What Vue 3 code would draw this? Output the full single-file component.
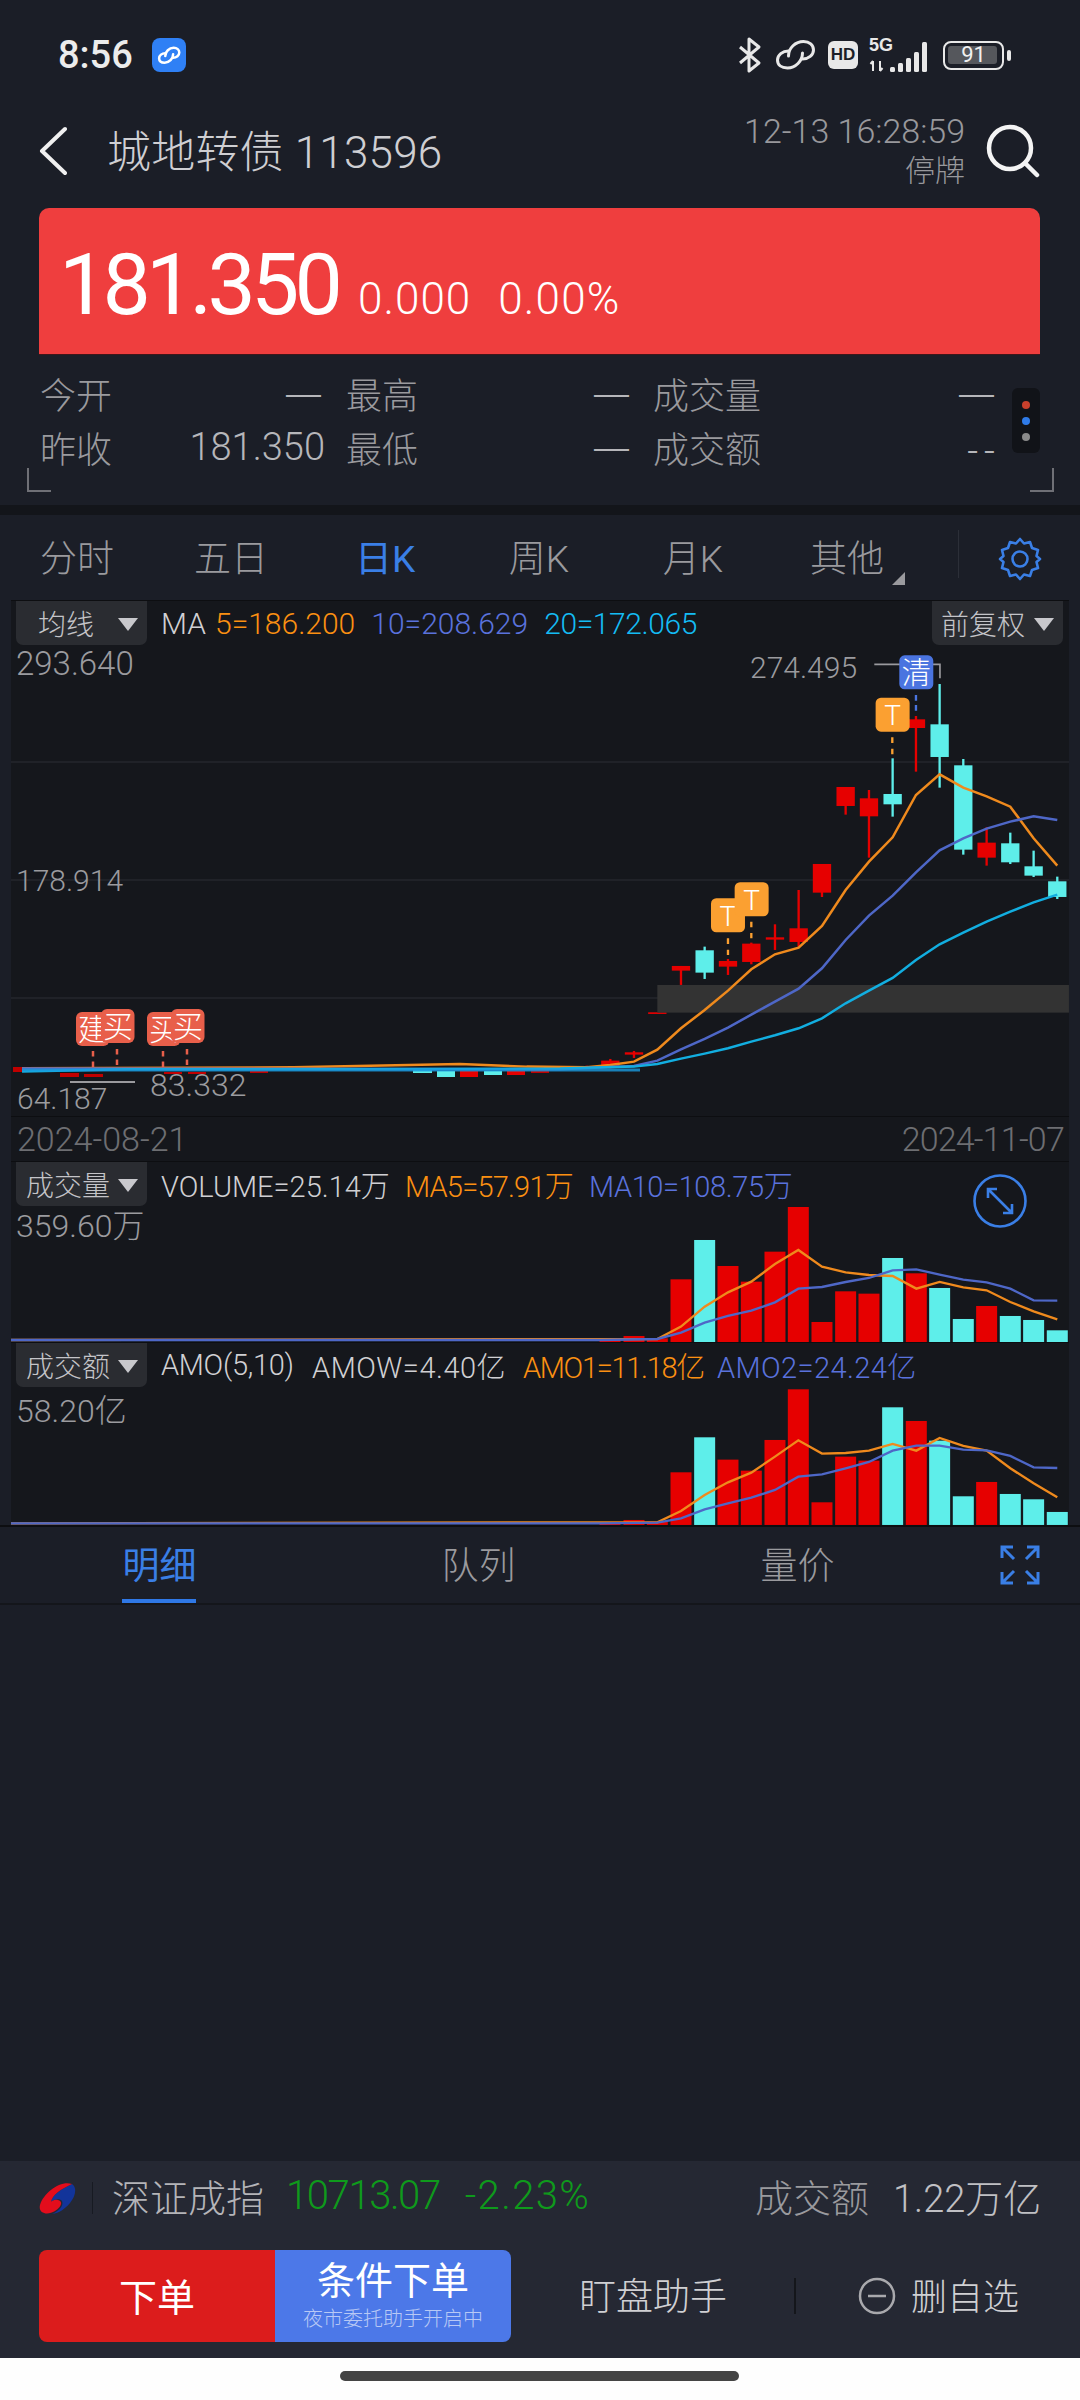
<script setup>
const RED = '#e60000'
const CY = '#5eeeea'
const candles = [
  [292,1119,1119,1117,1122,RED,55],[363,978,1035,978,992,RED],[434,920,1017,931,998,CY],[504,957,1005,963,980,RED],
  [574,908,973,911,966,RED],[645,853,930,892,899,RED],[716,750,920,865,906,RED],[786,672,771,672,758,RED],
  [857,441,524,441,498,RED],[927,450,653,475,529,RED],[998,355,530,462,493,CY],[1068,228,395,238,264,RED],
  [1139,132,443,253,351,CY],[1210,357,644,376,629,CY],[1280,562,677,608,653,RED],[1351,578,672,610,667,CY],
  [1421,632,711,679,707,CY],[1492,710,777,724,771,CY],[222,1233,1254,1237,1244,RED],[151,1257,1285,1262,1280,RED],
  [80,1277,1285,1279,1284,RED]
]
const flat = [[13,1067,10,5,'#c00000'],[60,1073,19,4,'#c00000'],[84,1074,19,3,'#c00000'],[250,1071,18,2,'#c00000'],[413,1069,19,4,CY],[437,1071,18,6,CY],[460,1071,18,6,RED],[484,1071,18,4,CY],[507,1071,18,4,RED],[531,1070,18,3,'#c00000'],[164,1072,18,2,'#c00000'],[188,1072,18,2,'#c00000']]
const p = a => a.map(v => v.join(',')).join(' ')
const mainLines = [
  {c:'#ef8a1d',d:p([[-1614,1285],[-800,1282],[-300,1272],[-100,1280],[80,1282],[151,1275],[222,1265],[292,1229],[363,1165],[434,1110],[504,1052],[574,988],[645,943],[716,923],[786,858],[857,750],[927,665],[998,592],[1068,465],[1139,403],[1210,443],[1280,469],[1351,500],[1421,595],[1492,677]])},
  {c:'#4e67c7',d:p([[-1614,1286],[-500,1287],[0,1288],[222,1278],[292,1262],[363,1228],[434,1197],[504,1163],[574,1124],[645,1085],[716,1046],[786,985],[857,900],[927,827],[998,767],[1068,697],[1139,631],[1210,595],[1280,566],[1351,545],[1421,529],[1492,540]])},
  {c:'#12aee0',d:p([[-1614,1295],[-1300,1288],[-500,1287],[0,1286],[222,1280],[292,1272],[363,1256],[434,1241],[504,1225],[574,1205],[645,1186],[716,1165],[786,1135],[857,1090],[927,1052],[998,1014],[1068,960],[1139,913],[1210,878],[1280,845],[1351,815],[1421,787],[1492,764]])}
]
const cx = [243,314,384,454,525,595,666,737,807,878,949,1019,1090,1160,1231,1301,1372]
const colr = [RED,CY,RED,RED,RED,RED,RED,RED,RED,CY,RED,CY,CY,RED,CY,CY,CY]
const volTops = [418,300,378,425,335,201,546,454,461,354,400,444,537,498,528,540,571]
const amoTops = [997,892,959,992,900,748,1087,950,962,802,843,902,1069,1026,1062,1078,1116]
const volBars = [[102,588,RED],[172,595,RED],[30,596,RED],...cx.map((x,i)=>[x,volTops[i],colr[i]])]
const amoBars = [[102,1140,RED],[172,1145,RED],[30,1146,RED],...cx.map((x,i)=>[x,amoTops[i],colr[i]])]
const volOrange = p([[-1770,600],[172,597],[243,560],[314,500],[384,457],[454,425],[525,372],[595,330],[666,380],[737,397],[807,405],[878,408],[949,446],[1019,426],[1090,442],[1160,451],[1231,486],[1301,514],[1372,538]])
const volBlue = p([[-1770,600],[0,600],[172,597],[243,578],[314,548],[384,528],[454,512],[525,487],[595,446],[666,441],[737,426],[807,414],[878,391],[949,388],[1019,404],[1090,419],[1160,427],[1231,446],[1301,481],[1372,482]])
const amoOrange = p([[-1770,1150],[172,1147],[243,1113],[314,1065],[384,1027],[454,998],[525,950],[595,901],[666,941],[737,939],[807,932],[878,912],[949,932],[1019,894],[1090,918],[1160,932],[1231,985],[1301,1030],[1372,1072]])
const amoBlue = p([[-1770,1150],[0,1150],[172,1148],[243,1135],[314,1108],[384,1090],[454,1073],[525,1050],[595,1010],[666,1003],[737,985],[807,966],[878,932],[949,917],[1019,917],[1090,929],[1160,931],[1231,948],[1301,982],[1372,984]])
const tabs = ['分时','五日','日K','周K','月K','其他']
const signal = [[21,5],[29,9],[37,14],[45,20],[53,30]]
const tBadges = [[453,775,504,895,945],[524,727,574,845,895],[947,173,997,292,345]]
const buyBadges = [[76,1012,'建',93,1051,1067],[101,1009,'买',117,1049,1065],[147,1012,'买',163,1051,1067],[171,1009,'买',187,1049,1065]]
</script>

<template>
  <div class="page">
    <div class="status">
      <span class="clock">8:56</span>
      <svg class="app-icon" viewBox="0 0 34 34"><rect width="34" height="34" rx="8" fill="#2f80f5"/><g transform="translate(6 9) scale(.56)" fill="none" stroke="#fff" stroke-width="4.500" stroke-linecap="round"><path d="M13 16C13 8 20 1.500 28 1.500C34 1.500 38 5 38 10C38 15 33 19 27 19"/><path d="M27 13C27 21 20 28 12 28C6 28 2 25 2 20C2 15 7 11 13 11"/></g></svg>
      <div class="status-right">
        <svg class="st-bt" viewBox="0 0 24 38" fill="none" stroke="#e8e8e8" stroke-width="3" stroke-linejoin="round"><path d="M2 11L21 27L11 35V3L21 11L2 27"/></svg>
        <svg class="st-link" viewBox="0 0 40 30" fill="none" stroke="#e8e8e8" stroke-width="3" stroke-linecap="round"><path d="M13 16C13 8 20 1.500 28 1.500C34 1.500 38 5 38 10C38 15 33 19 27 19"/><path d="M27 13C27 21 20 28 12 28C6 28 2 25 2 20C2 15 7 11 13 11"/></svg>
        <span class="st-hd">HD</span>
        <div class="st-sig">
          <span class="st-5g">5G</span>
          <svg viewBox="0 0 62 32" class="st-bars"><path d="M4 21V31M1.500 24L4 21M11 31V21M11 31L13.500 28" stroke="#e8e8e8" stroke-width="2" fill="none"/><rect v-for="b in signal" :key="b[0]" :x="b[0]" :y="32-b[1]" width="5" :height="b[1]" rx="1.500" fill="#e8e8e8"/></svg>
        </div>
        <div class="st-batt"><div class="st-batt-fill"></div><span>91</span></div>
        <i class="st-tip"></i>
      </div>
    </div>

    <header class="head">
      <svg class="back" viewBox="0 0 28 50" fill="none" stroke="#f0f0f0" stroke-width="4" stroke-linecap="round" stroke-linejoin="round"><path d="M26 3L3 25L26 47"/></svg>
      <h1 class="title">城地转债 113596</h1>
      <div class="head-info"><div class="hi-date">12-13 16:28:59</div><div>停牌</div></div>
      <svg class="search" viewBox="0 0 54 54" fill="none" stroke="#f4f4f4" stroke-width="4.500" stroke-linecap="round"><circle cx="24" cy="24" r="21"/><path d="M39 39L51 51"/></svg>
    </header>

    <section class="quote">
      <span class="q-big">181.350</span><span class="q-s1">0.000</span><span class="q-s2">0.00%</span>
    </section>

    <section class="stats">
      <span>今开</span><b class="dash">—</b><span>最高</span><b class="dash">—</b><span>成交量</span><b class="dash">—</b>
      <span>昨收</span><b>181.350</b><span>最低</span><b class="dash">—</b><span>成交额</span><b class="dbl">--</b>
      <div class="dots"><i class="d1"></i><i class="d2"></i><i class="d3"></i></div>
      <i class="bracket b-l"></i><i class="bracket b-r"></i>
    </section>

    <nav class="tabs">
      <span v-for="t in tabs" :key="t" class="tab" :class="{on:t==='日K'}">{{ t }}</span>
      <i class="corner"></i><i class="tab-div"></i>
      <svg class="gear" viewBox="0 0 44 44" fill="none" stroke="#3a7fe6" stroke-width="2.600" stroke-linejoin="round"><path d="M22 2L26 6.500L32 5L34 11L40 13L38.500 19L42 22L38.500 25L40 31L34 33L32 39L26 37.500L22 42L18 37.500L12 39L10 33L4 31L5.500 25L2 22L5.500 19L4 13L10 11L12 5L18 6.500Z"/><circle cx="22" cy="22" r="7.500"/></svg>
    </nav>

    <section class="panel main">
      <svg class="plot" viewBox="11 600 1058 516" width="1058" height="516">
        <g stroke="#25272d" stroke-width="1.500"><path d="M11 762H1069M11 880H1069M11 998H658"/></g>
        <rect v-for="(f,i) in flat" :key="'f'+i" :x="f[0]" :y="f[1]" :width="f[2]" :height="f[3]" :fill="f[4]"/>
        <g transform="translate(560 640) scale(.3333)">
          <g v-for="(c,i) in candles" :key="i">
            <line :x1="c[0]" :x2="c[0]" :y1="c[1]" :y2="c[2]" :stroke="c[5]" stroke-width="7"/>
            <rect :x="c[0]-(c[6]||55)/2" :y="c[3]" :width="c[6]||55" :height="c[4]-c[3]" :fill="c[5]"/>
          </g>
          <rect x="292" y="1035" width="1235" height="83" fill="#333"/>
          <polyline v-for="l in mainLines" :key="l.c" :points="l.d" fill="none" :stroke="l.c" stroke-width="7.500"/>
          <path d="M943 73H1140V115" fill="none" stroke="#9a9a9e" stroke-width="5"/>
          <g v-for="t in tBadges" :key="t[0]">
            <line :x1="t[2]" :x2="t[2]" :y1="t[3]" :y2="t[4]" stroke="#fba031" stroke-width="7" stroke-dasharray="17 17"/>
            <rect :x="t[0]" :y="t[1]" width="102" height="102" rx="16" fill="#fba031"/>
            <text :x="t[0]+51" :y="t[1]+82" class="badge-t">T</text>
          </g>
          <line x1="1068" x2="1068" y1="165" y2="212" stroke="#4a74e0" stroke-width="7" stroke-dasharray="17 13"/>
          <rect x="1018" y="46" width="102" height="102" rx="16" fill="#4a74e0"/>
          <text x="1069" y="130" class="badge-t cjk">清</text>
        </g>
        <path d="M22 1070H640" stroke="#1a9be0" stroke-width="3" opacity=".8"/>
        <g v-for="b in buyBadges" :key="b[0]">
          <line :x1="b[3]" :x2="b[3]" :y1="b[4]" :y2="b[5]" stroke="#e85f4a" stroke-width="2.500" stroke-dasharray="5.500 5"/>
          <rect :x="b[0]" :y="b[1]" width="33.500" height="34" rx="6" fill="#e85f4a"/>
          <text :x="b[0]+17" :y="b[1]+28" class="buy-t">{{ b[2] }}</text>
        </g>
        <path d="M70 1082H135" stroke="#9a9a9e" stroke-width="2"/>
      </svg>
      <div class="legend big">
        <span class="drop">均线<i></i></span>
        <span class="lg lg-w">MA</span>
        <span class="lg lg-o">5=186.200</span>
        <span class="lg lg-b">10=208.629</span>
        <span class="lg lg-c">20=172.065</span>
        <span class="drop drop-r">前复权<i></i></span>
      </div>
      <span class="num n1">293.640</span>
      <span class="num n2">178.914</span>
      <span class="num n3">274.495</span>
      <span class="num n4">64.187</span>
      <span class="num n5">83.332</span>
    </section>

    <div class="dates"><span>2024-08-21</span><span class="date-r">2024-11-07</span></div>

    <section class="panel vol">
      <svg class="plot" viewBox="11 1161 1058 181" width="1058" height="181">
        <g transform="translate(600 1140) scale(.3333)">
          <rect v-for="b in volBars" :key="b[0]" :x="b[0]-31.500" :y="b[1]" width="63" :height="607-b[1]" :fill="b[2]"/>
          <polyline :points="volOrange" fill="none" stroke="#ef8a1d" stroke-width="7"/>
          <polyline :points="volBlue" fill="none" stroke="#4e67c7" stroke-width="7"/>
        </g>
      </svg>
      <div class="legend">
        <span class="drop drop3">成交量<i></i></span>
        <span class="lg lg-w v1">VOLUME=25.14万</span>
        <span class="lg lg-o v2">MA5=57.91万</span>
        <span class="lg lg-b v3">MA10=108.75万</span>
      </div>
      <span class="num n6">359.60万</span>
      <svg class="expand" viewBox="0 0 54 54" fill="none" stroke="#3a7fe6" stroke-width="2.600"><circle cx="27" cy="27" r="25.500"/><path d="M15 15L39 39M15 24V15H24M39 30V39H30"/></svg>
    </section>

    <section class="panel amo">
      <svg class="plot" viewBox="11 1342 1058 183" width="1058" height="183">
        <g transform="translate(600 1140) scale(.3333)">
          <rect v-for="b in amoBars" :key="b[0]" :x="b[0]-31.500" :y="b[1]" width="63" :height="1155-b[1]" :fill="b[2]"/>
          <polyline :points="amoOrange" fill="none" stroke="#ef8a1d" stroke-width="7"/>
          <polyline :points="amoBlue" fill="none" stroke="#4e67c7" stroke-width="7"/>
        </g>
      </svg>
      <div class="legend">
        <span class="drop drop3">成交额<i></i></span>
        <span class="lg lg-w a1">AMO(5,10)</span>
        <span class="lg lg-w a2">AMOW=4.40亿</span>
        <span class="lg lg-o a3">AMO1=11.18亿</span>
        <span class="lg lg-b a4">AMO2=24.24亿</span>
      </div>
      <span class="num n7">58.20亿</span>
    </section>

    <nav class="sub-tabs">
      <span class="sub on">明细</span><span class="sub">队列</span><span class="sub">量价</span>
      <svg class="full" viewBox="0 0 40 40" fill="none" stroke="#3a7fe6" stroke-width="3"><path d="M2 13V2H13M38 13V2H27M2 27V38H13M38 27V38H27M2 2L14 14M38 2L26 14M2 38L14 26M38 38L26 26"/></svg>
    </nav>

    <div class="filler"></div>

    <footer class="foot">
      <div class="index">
        <svg class="logo" viewBox="0 0 37 33"><path d="M33 2C38 5 37 14 31 21C26 27 20 31 13 32C20 29 25 24 23 19C21 16 15 17 12 20C13 13 22 7 33 2Z" fill="#12349a"/><path d="M33 2C22 -2 5 10 1 23C-1 31 8 34 16 29C23 25 24 19 19 18C15 17 12 20 12 20C13 13 22 7 33 2Z" fill="#e30d1c"/></svg>
        <i class="idx-div"></i>
        <span class="idx-name">深证成指</span>
        <span class="idx-green">10713.07</span>
        <span class="idx-green idx-pct">-2.23%</span>
        <span class="idx-lab">成交额</span>
        <span class="idx-val">1.22万亿</span>
      </div>
      <div class="actions">
        <button class="btn-red">下单</button>
        <button class="btn-blue"><span>条件下单</span><small>夜市委托助手开启中</small></button>
        <span class="watch">盯盘助手</span>
        <i class="act-div"></i>
        <svg class="minus" viewBox="0 0 38 38" fill="none" stroke="#a9a9ad" stroke-width="2.500"><circle cx="19" cy="19" r="17"/><path d="M10 19H28"/></svg>
        <span class="remove">删自选</span>
      </div>
    </footer>
    <div class="navbar"><i></i></div>
  </div>
</template>

<style>
html, body { margin: 0; background: #1b1e27; }
.badge-t { font-size: 84px; fill: #fff; text-anchor: middle; font-family: Roboto, sans-serif; font-weight: 300; }
.badge-t.cjk { font-size: 88px; font-family: "Noto Sans CJK SC", sans-serif; }
.buy-t { font-size: 30px; fill: #fff; text-anchor: middle; font-family: "Noto Sans CJK SC", sans-serif; }
</style>
<style scoped>
.page { width: 1080px; height: 2400px; display: flex; flex-direction: column; background: #1b1e27; overflow: hidden; font-family: Roboto, "Noto Sans CJK SC", sans-serif; font-weight: 300; color: #a0a0a4; position: relative; }
i { display: block; }

.status { height: 110px; display: flex; align-items: center; padding: 0 0 0 58px; box-sizing: border-box; flex: none; }
.clock { font-size: 38px; font-weight: 500; color: #ececec; width: 94px; }
.app-icon { width: 34px; height: 34px; }
.status-right { margin-left: auto; margin-right: 69px; display: flex; align-items: center; }
.st-bt { width: 24px; height: 38px; margin-right: 13px; }
.st-link { width: 41px; height: 30px; margin-right: 12px; }
.st-hd { width: 30px; height: 28px; border-radius: 6px; background: #e8e8e8; color: #1b1e27; font: 700 17px "Liberation Sans", sans-serif; display: flex; align-items: center; justify-content: center; margin-right: 11px; }
.st-sig { width: 62px; height: 34px; position: relative; margin-right: 12px; }
.st-5g { position: absolute; left: 0; top: -3px; font: 700 18px "Liberation Sans", sans-serif; color: #e8e8e8; }
.st-bars { position: absolute; left: 0; top: 2px; width: 62px; height: 32px; }
.st-batt { width: 61px; height: 29px; border: 2.500px solid #e8e8e8; border-radius: 8px; box-sizing: border-box; position: relative; padding: 3px; }
.st-batt-fill { width: 49px; height: 18px; background: #55575c; border-radius: 3px; }
.st-batt span { position: absolute; inset: -2px 0 0 0; display: flex; align-items: center; justify-content: center; color: #f0f0f0; font: 400 22px Roboto, sans-serif; }
.st-tip { width: 4px; height: 11px; background: #e8e8e8; border-radius: 2px; margin-left: 3px; }

.head { height: 98px; display: flex; align-items: center; padding: 0 40px 0 39px; position: relative; flex: none; box-sizing: border-box; }
.back { width: 28px; height: 50px; margin-top: -16px; }
.title { margin: -21px 0 0 40px; font-size: 44px; font-weight: 300; color: #cfcfd3; word-spacing: 0; letter-spacing: .2px; }
.head-info { margin-left: auto; text-align: right; font-size: 30px; line-height: 41px; color: #98989c; margin-top: -16px; margin-right: 21px; }
.hi-date { font-size: 34px; letter-spacing: 0; line-height: 38px; }
.search { width: 54px; height: 54px; margin-top: -16px; }

.quote { margin: 0 40px 0 39px; height: 147px; flex: none; box-sizing: border-box; background: #ef3e3e; border-radius: 10px 10px 0 0; color: #fff; padding: 26px 0 0 20px; display: flex; align-items: baseline; border-bottom: 1px solid #40161a; }
.q-big { font-size: 86px; font-weight: 400; letter-spacing: -4.800px; margin-right: 20px; }
.q-s1 { font-size: 44px; font-weight: 300; letter-spacing: 1px; margin-right: 27px; }
.q-s2 { font-size: 44px; font-weight: 300; letter-spacing: 1.200px; }

.stats { height: 150px; flex: none; box-sizing: border-box; padding: 11px 0 0 40px; display: grid; grid-template-columns: 72px 210px 96px 212px 132px 233px; grid-auto-rows: 54px; align-items: center; font-size: 36px; position: relative; color: #9a9a9e; }
.stats b { font-weight: 300; text-align: right; color: #b6b6ba; font-size: 38px; letter-spacing: 0; margin-right: -3px; }
.stats b.dash { font-family: "Noto Sans CJK SC", sans-serif; font-size: 44px; line-height: 44px; letter-spacing: 0; margin-top: -8px; margin-right: -1px; }
.stats b.dbl { letter-spacing: 6px; margin-right: -6px; margin-top: 8px; }
.stats span:nth-of-type(2), .stats span:nth-of-type(5) { margin-left: 24px; }
.stats span:nth-of-type(3), .stats span:nth-of-type(6) { margin-left: 23px; }
.dots { position: absolute; left: 1012px; top: 33px; width: 28px; height: 65px; background: #111318; border-radius: 6px; display: flex; flex-direction: column; align-items: center; justify-content: center; gap: 8px; }
.dots i { width: 8px; height: 8px; border-radius: 50%; }
.d1 { background: #c8402c; } .d2 { background: #2f7be8; } .d3 { background: #8a8a8a; }
.bracket { position: absolute; top: 113px; width: 22px; height: 22px; border-bottom: 2px solid #6f7076; }
.b-l { left: 27px; border-left: 2px solid #6f7076; }
.b-r { left: 1030px; border-right: 2px solid #6f7076; }

.tabs { height: 95px; flex: none; box-sizing: border-box; border-top: 10px solid #13151a; display: flex; align-items: center; position: relative; padding-bottom: 3px; }
.tab { width: 154px; text-align: center; font-size: 37px; color: #9a9a9e; }
.tab.on { color: #3a7fe6; font-weight: 400; position: relative; }
.tab.on::after { content: ""; position: absolute; left: 40px; width: 74px; bottom: -23px; height: 6px; background: #2f78e6; border-radius: 3px 3px 0 0; }
.corner { position: absolute; left: 892px; top: 57px; width: 0; height: 0; border-left: 13px solid transparent; border-bottom: 13px solid #9a9a9e; }
.tab-div { position: absolute; left: 958px; top: 15px; width: 1px; height: 48px; background: #2c2f38; }
.gear { position: absolute; left: 998px; top: 22px; width: 44px; height: 44px; }

.panel { margin-left: 11px; width: 1058px; background: #15171c; position: relative; flex: none; border-top: 1px solid #0d0e11; box-sizing: border-box; }
.main { height: 516px; }
.vol { height: 181px; }
.amo { height: 183px; }
.plot { position: absolute; left: 0; top: -1px; display: block; }
.legend { position: relative; display: flex; align-items: center; height: 44px; font-size: 29px; padding-left: 5px; }
.legend.big { font-size: 30px; }
.drop { position: relative; width: 131px; height: 44px; box-sizing: border-box; padding-left: 22px; background: #2a2c31; border-radius: 0 0 7px 7px; color: #c4c4c8; display: flex; align-items: center; margin-right: 14px; white-space: nowrap; font-size: 28px; flex: none; }
.drop3 { padding-left: 10px; }
.drop i { position: absolute; right: 9px; top: 17px; border-left: 10px solid transparent; border-right: 10px solid transparent; border-top: 13px solid #c8c8cc; }
.drop-r { margin: 0 0 0 auto; margin-right: 6px; padding-left: 9px; }
.lg { margin-right: 16px; white-space: nowrap; flex: none; }
.lg-w { color: #d0d0d3; }
.lg-o { color: #fb9012; } .lg-b { color: #5a72dc; } .lg-c { color: #14bcf4; letter-spacing: -.4px; }
.main .lg-w { margin-right: 9px; }
.v1 { width: 244px; margin-right: 0; }
.v2 { width: 184px; margin-right: 0; letter-spacing: -.8px; }
.v3 { letter-spacing: -.4px; }
.a1 { width: 151px; margin-right: 0; letter-spacing: -.3px; }
.a2 { width: 211px; margin-right: 0; letter-spacing: .5px; }
.a3 { width: 194px; margin-right: 0; letter-spacing: -1.300px; }
.a4 { letter-spacing: .4px; }
.num { position: absolute; font-size: 30px; line-height: 36px; color: #9b9b9f; white-space: nowrap; }
.n1 { left: 5px; top: 45px; font-size: 33px; }
.n2 { left: 5px; top: 262px; }
.n3 { left: 739px; top: 49px; }
.n4 { left: 6px; top: 480px; }
.n5 { left: 139px; top: 466px; font-size: 32px; }
.n6 { left: 5px; top: 46px; font-size: 32px; }
.n7 { left: 5px; top: 50px; font-size: 32px; }
.expand { position: absolute; left: 962px; top: 12px; width: 54px; height: 54px; }

.dates { margin-left: 11px; width: 1058px; height: 45px; flex: none; box-sizing: border-box; background: #15171c; display: flex; justify-content: space-between; align-items: center; padding: 0 5px 0 6px; font-size: 34px; color: #6d6e72; border-top: 1px solid #0d0e11; }
.date-r { letter-spacing: -.8px; }

.sub-tabs { height: 80px; flex: none; box-sizing: border-box; display: flex; align-items: center; border-top: 2px solid #0d0e11; border-bottom: 2px solid #14161b; position: relative; }
.sub { width: 319px; text-align: center; font-size: 37px; color: #9a9a9e; position: relative; height: 76px; line-height: 80px; }
.sub.on { color: #3a7fe6; font-weight: 400; }
.sub.on::after { content: ""; position: absolute; left: 122px; width: 74px; bottom: 0; height: 4px; background: #2f78e6; }
.full { position: absolute; left: 1000px; top: 18px; width: 40px; height: 40px; }

.filler { flex: 1; }

.foot { height: 197px; flex: none; background: #252833; box-sizing: border-box; padding-left: 39px; }
.index { height: 74px; display: flex; align-items: center; font-size: 38px; position: relative; }
.index span { margin-top: -5px; }
.logo { width: 37px; height: 33px; }
.idx-div { width: 1px; height: 32px; background: #171a22; margin: 0 19px 0 16px; }
.idx-name { color: #b4b4b8; margin-right: 22px; }
.idx-green { color: #0f9a1c; font-size: 40px; letter-spacing: -1.400px; }
.idx-pct { margin-left: 25px; letter-spacing: 1.400px; }
.idx-lab { position: absolute; left: 716px; color: #9a9a9e; }
.idx-val { position: absolute; left: 854px; color: #c0c0c4; }
.actions { display: flex; align-items: center; height: 92px; margin-top: 15px; }
.btn-red, .btn-blue { border: 0; padding: 0; color: #fff; font-family: inherit; height: 92px; width: 236px; }
.btn-red { background: #dc1c1c; border-radius: 8px 0 0 8px; font-size: 38px; font-weight: 400; padding-bottom: 4px; }
.btn-blue { background: #4c78e8; border-radius: 0 8px 8px 0; display: flex; flex-direction: column; align-items: center; justify-content: center; font-size: 38px; font-weight: 400; line-height: 48px; padding-bottom: 2px; }
.btn-blue small { font-size: 20px; line-height: 28px; color: #b9c9f5; font-weight: 300; }
.watch { margin-left: 68px; font-size: 37px; color: #d0d0d3; width: 146px; white-space: nowrap; margin-top: -5px; }
.act-div { width: 2px; height: 36px; background: #14161b; margin-left: 69px; }
.minus { width: 38px; height: 38px; margin-left: 62px; }
.remove { margin-left: 15px; font-size: 36px; color: #d0d0d3; white-space: nowrap; margin-top: -5px; }

.navbar { height: 42px; flex: none; background: #fefefe; position: relative; }
.navbar i { position: absolute; left: 340px; top: 13px; width: 399px; height: 10px; border-radius: 5px; background: #444; }
</style>
